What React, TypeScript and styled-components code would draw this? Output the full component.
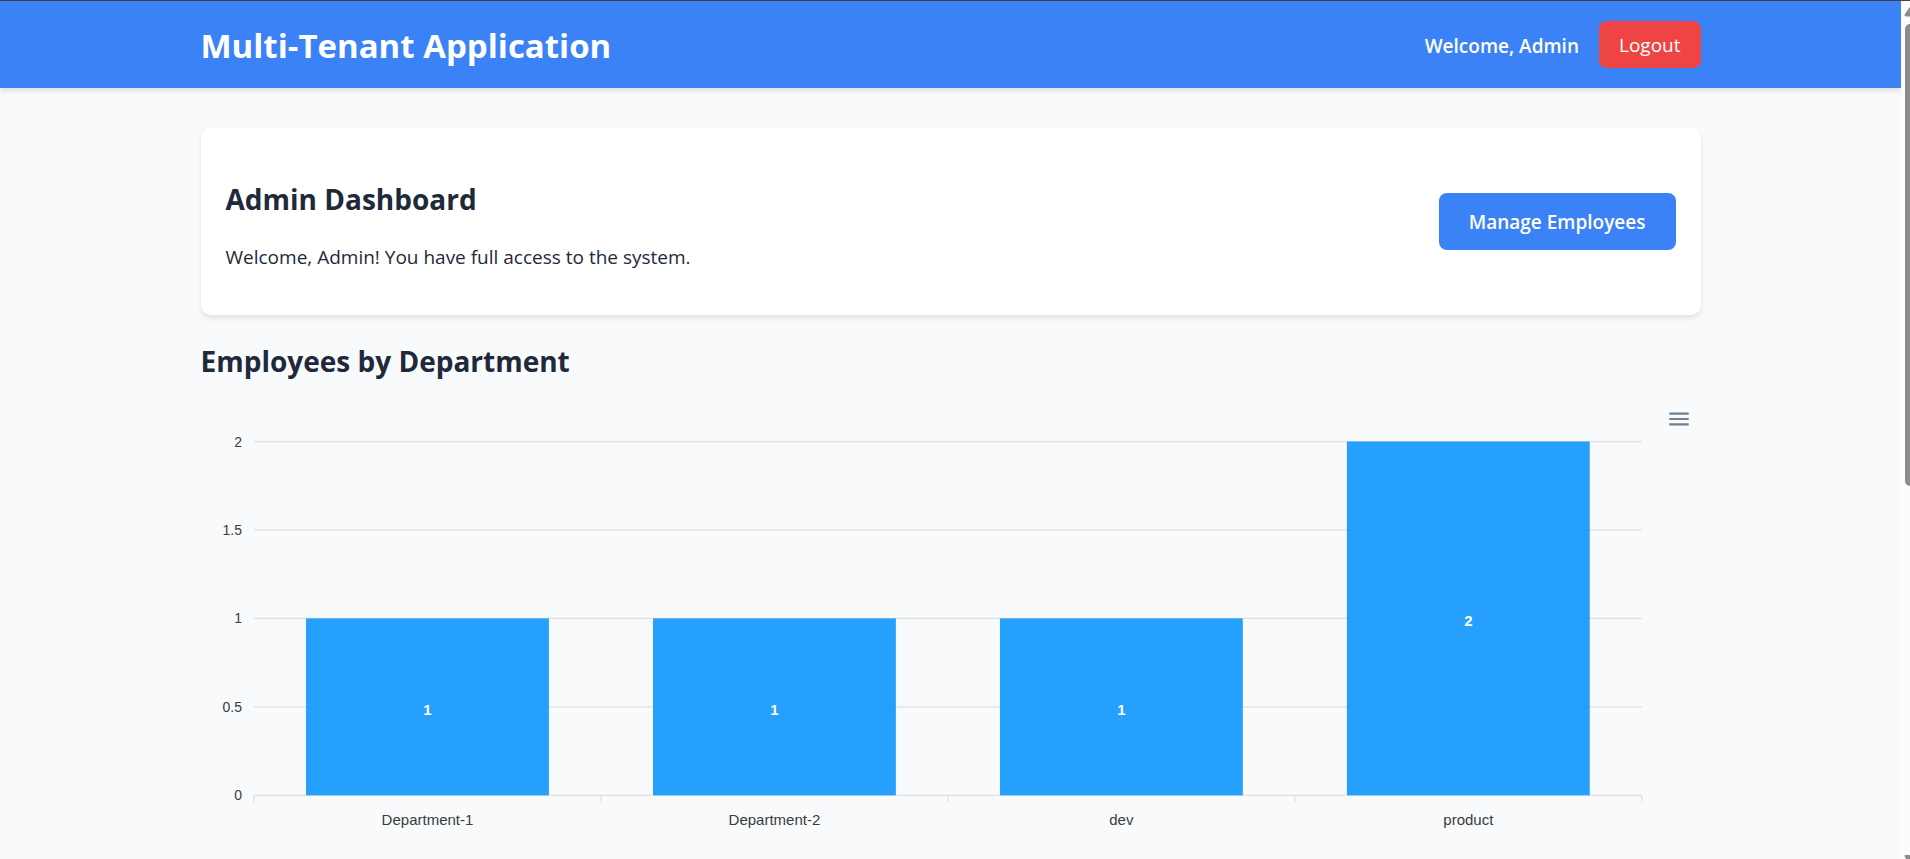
import React from "react";
import styled, { createGlobalStyle } from "styled-components";

const GlobalStyle = createGlobalStyle`
  *, *::before, *::after { box-sizing: border-box; }
  body {
    margin: 0;
    background: #f9fafc;
    color: #1e293b;
    font-family: "Segoe UI", "Open Sans", "Noto Sans", sans-serif;
    font-size: 19px;
    line-height: 26px;
  }
`;

const Window = styled.div`
  display: flex;
  min-height: 100vh;
  border-top: 1px solid #473c48;
`;

const Page = styled.div`
  flex: 1;
  min-width: 0;
`;

const Container = styled.div`
  width: 100%;
  max-width: 1500px;
  margin: 0 auto;
`;

const Header = styled.header`
  background: #3b82f6;
  color: #ffffff;
  padding: 20px 0;
  box-shadow: 0 3px 5px rgba(0, 0, 0, 0.1);
`;

const HeaderRow = styled(Container)`
  display: flex;
  align-items: center;
  justify-content: space-between;
`;

const AppTitle = styled.h1`
  margin: 0;
  padding-top: 3px;
  font-size: 33px;
  line-height: 44px;
  font-weight: 700;
`;

const UserArea = styled.div`
  display: flex;
  align-items: center;
  gap: 20px;
`;

const Welcome = styled.span`
  padding-top: 2px;
  font-weight: 600;
`;

const Button = styled.button<{ $tone: "danger" | "primary" }>`
  border: 0;
  border-radius: 8px;
  color: #ffffff;
  font-family: inherit;
  font-size: 19px;
  line-height: 27px;
  cursor: pointer;
  background: ${(p) => (p.$tone === "danger" ? "#ef4444" : "#3b82f6")};
  padding: ${(p) => (p.$tone === "danger" ? "11px 20px 9px" : "16px 30px 14px")};
  font-weight: ${(p) => (p.$tone === "danger" ? 400 : 600)};
`;

const Main = styled(Container)`
  padding-top: 40px;
`;

const Card = styled.section`
  display: flex;
  align-items: center;
  justify-content: space-between;
  padding: 25px;
  border-radius: 10px;
  background: #ffffff;
  box-shadow: 0 3px 5px rgba(0, 0, 0, 0.1);
`;

const Heading = styled.h2`
  margin: 24px 0 22px;
  font-size: 28px;
  line-height: 45px;
  font-weight: 700;
`;

const CardText = styled.p`
  margin: 0 0 20px;
`;

const Toolbar = styled.div`
  display: flex;
  justify-content: flex-end;
  padding-right: 9px;
`;

const MenuButton = styled.button`
  display: block;
  padding: 0;
  border: 0;
  background: none;
  cursor: pointer;
  svg { display: block; fill: #6e8192; }
`;

const ChartSvg = styled.svg`
  display: block;
  width: 100%;
  height: auto;
  font-family: "Liberation Sans", Arial, sans-serif;
`;

const AxisLabel = styled.text<{ $size: number }>`
  fill: #373d3f;
  font-size: ${(p) => p.$size}px;
`;

const DataLabel = styled.text`
  fill: #ffffff;
  font-size: 15px;
  font-weight: 700;
`;

const ScrollTrack = styled.div`
  flex: none;
  width: 9px;
  display: flex;
  flex-direction: column;
  overflow: hidden;
  background: #fcfcfc;
  svg { display: block; flex: none; fill: #8b8b8b; }
`;

const ScrollThumb = styled.div`
  flex: 5;
  width: 11px;
  margin-left: 4px;
  border-radius: 5px;
  background: #8b8b8b;
`;

const ScrollRest = styled.div`
  flex: 4;
`;

const departments = [
  { name: "Department-1", count: 1 },
  { name: "Department-2", count: 1 },
  { name: "dev", count: 1 },
  { name: "product", count: 2 },
];

const LEFT = 53;
const RIGHT = 1440.8;
const TOP = 9.5;
const BASE = 363.3;
const MAX = 2;
const step = (RIGHT - LEFT) / departments.length;
const yOf = (value: number) => BASE - (value / MAX) * (BASE - TOP);

function DepartmentChart() {
  return (
    <ChartSvg viewBox="0 0 1500 420" role="img" aria-label="Employees by Department">
      {[2, 1.5, 1, 0.5, 0].map((v) => (
        <g key={v}>
          <line x1={LEFT} x2={RIGHT} y1={yOf(v)} y2={yOf(v)} stroke="#e0e0e0" strokeWidth="1.25" />
          <AxisLabel $size={14} x="41" y={yOf(v) + 5} textAnchor="end">
            {v}
          </AxisLabel>
        </g>
      ))}
      {[0, 1, 2, 3, 4].map((i) => (
        <line
          key={i}
          x1={LEFT + i * step}
          x2={LEFT + i * step}
          y1={BASE}
          y2={BASE + 7.5}
          stroke="#e0e0e0"
          strokeWidth="1.25"
        />
      ))}
      {departments.map((d, i) => {
        const center = LEFT + (i + 0.5) * step;
        const top = yOf(d.count);
        return (
          <g key={d.name}>
            <rect
              x={center - step * 0.35}
              y={top}
              width={step * 0.7}
              height={BASE - top}
              fill="#008ffb"
              fillOpacity="0.85"
            />
            <DataLabel x={center} y={(top + BASE) / 2 + 8} textAnchor="middle">
              {d.count}
            </DataLabel>
            <AxisLabel $size={15} x={center} y={BASE + 30} textAnchor="middle">
              {d.name}
            </AxisLabel>
          </g>
        );
      })}
    </ChartSvg>
  );
}

export default function App() {
  return (
    <>
      <GlobalStyle />
      <Window>
        <Page>
          <Header>
            <HeaderRow>
              <AppTitle>Multi-Tenant Application</AppTitle>
              <UserArea>
                <Welcome>Welcome, Admin</Welcome>
                <Button type="button" $tone="danger">Logout</Button>
              </UserArea>
            </HeaderRow>
          </Header>
          <Main as="main">
            <Card>
              <div>
                <Heading>Admin Dashboard</Heading>
                <CardText>Welcome, Admin! You have full access to the system.</CardText>
              </div>
              <Button type="button" $tone="primary">Manage Employees</Button>
            </Card>
            <section>
              <Heading>Employees by Department</Heading>
              <Toolbar>
                <MenuButton type="button" aria-label="Chart menu">
                  <svg width="26" height="26" viewBox="0 0 24 24">
                    <path d="M3 18h18v-2H3v2zm0-5h18v-2H3v2zm0-7v2h18V6H3z" />
                  </svg>
                </MenuButton>
              </Toolbar>
              <DepartmentChart />
            </section>
          </Main>
        </Page>
        <ScrollTrack aria-hidden="true">
          <svg width="19" height="23" viewBox="0 0 19 23">
            <path d="M4 15q-1-1 0-2l4-6q1.500-1.500 3 0l4 6q1 2-1 2.500H5z" />
          </svg>
          <ScrollThumb />
          <ScrollRest />
          <svg width="19" height="4" viewBox="0 0 19 4">
            <path d="M4 0h11q1 1 0 2l-1 2H5L4 2q-1-1 0-2z" />
          </svg>
        </ScrollTrack>
      </Window>
    </>
  );
}
